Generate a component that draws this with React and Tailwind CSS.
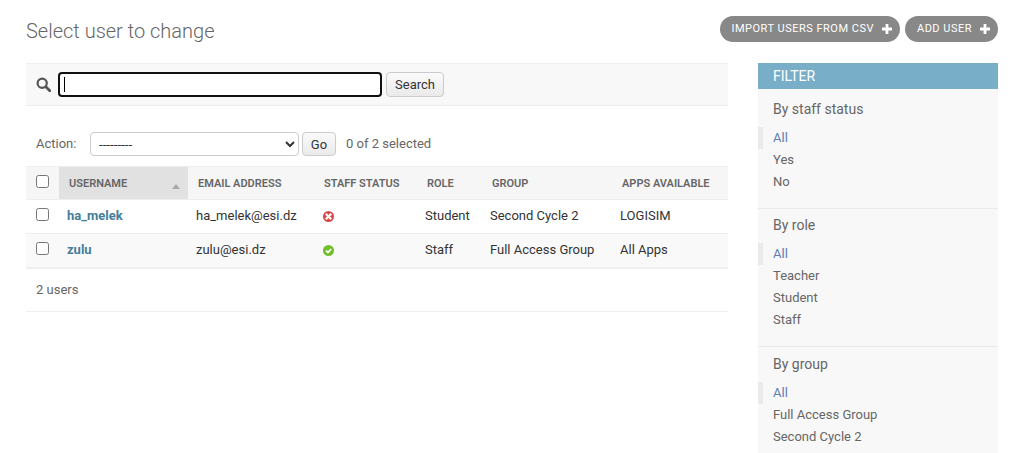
const font = { fontFamily: "Roboto, sans-serif" };

function PlusIcon() {
  return (
    <svg width="10" height="10" viewBox="0 0 10 10" className="ml-[8px]" fill="#fff">
      <path d="M3.6 0h2.8v3.6H10v2.8H6.4V10H3.6V6.4H0V3.6h3.6z" />
    </svg>
  );
}

function SearchIcon() {
  return (
    <svg width="15" height="15" viewBox="0 0 15 15" fill="none" stroke="#555">
      <circle cx="6.2" cy="6.2" r="4.6" strokeWidth="2.2" />
      <path d="M9.8 9.8l4 4" strokeWidth="2.8" strokeLinecap="round" />
    </svg>
  );
}

function NoIcon() {
  return (
    <svg width="11" height="11" viewBox="0 0 11 11" className="block">
      <circle cx="5.5" cy="5.5" r="5.5" fill="#dd4646" />
      <path d="M3.5 3.5l4 4M7.5 3.5l-4 4" stroke="#fff" strokeWidth="2.2" strokeLinecap="square" />
    </svg>
  );
}

function YesIcon() {
  return (
    <svg width="11" height="11" viewBox="0 0 11 11" className="block">
      <circle cx="5.5" cy="5.5" r="5.5" fill="#70bf2b" />
      <path d="M3 5.6l1.9 1.9L8.1 4" stroke="#fff" strokeWidth="1.8" fill="none" />
    </svg>
  );
}

function Checkbox() {
  return <input type="checkbox" className="block w-[13px] h-[13px] m-0" />;
}

function ToolButton({ children }) {
  return (
    <a className="flex items-center h-[26px] pl-[12px] pr-[8px] rounded-[15px] bg-[#888] text-white text-[11px] tracking-[0.5px] uppercase">
      {children}
      <PlusIcon />
    </a>
  );
}

const headers = [
  { label: "Email address", w: "w-[126px]" },
  { label: "Staff status", w: "w-[103px]" },
  { label: "Role", w: "w-[65px]" },
  { label: "Group", w: "w-[130px]" },
  { label: "Apps available", w: "" },
];

const rows = [
  { name: "ha_melek", email: "ha_melek@esi.dz", staff: false, role: "Student", group: "Second Cycle 2", apps: "LOGISIM", bg: "bg-white" },
  { name: "zulu", email: "zulu@esi.dz", staff: true, role: "Staff", group: "Full Access Group", apps: "All Apps", bg: "bg-[#f9f9f9]" },
];

function ResultsTable() {
  return (
    <table className="w-full table-fixed border-collapse text-[13px] text-[#333]">
      <thead>
        <tr className="h-[33px] bg-[#f6f6f6] border-t border-b border-[#eee] text-[11px] font-semibold text-[#666] uppercase text-left">
          <th className="w-[33px] pl-[10px] pb-[4px] font-semibold"><Checkbox /></th>
          <th className="w-[129px] pl-[10px] pr-[8px] pt-[2px] bg-[#e1e1e1] font-semibold">
            <div className="flex items-center justify-between">
              <span>Username</span>
              <span className="mt-[5px] w-0 h-0 border-x-[4.5px] border-x-transparent border-b-[5px] border-b-[#aaa]" />
            </div>
          </th>
          {headers.map((h) => (
            <th key={h.label} className={`${h.w} pl-[10px] pt-[2px] font-semibold`}>{h.label}</th>
          ))}
        </tr>
      </thead>
      <tbody>
        {rows.map((r, i) => (
          <tr key={r.name} className={`h-[34px] ${r.bg} ${i === rows.length - 1 ? "border-b-2" : "border-b"} border-[#eee]`}>
            <td className="pl-[10px] pb-[4px]"><Checkbox /></td>
            <td className="pl-[8px] pb-[2px] font-bold text-[#447e9b]">{r.name}</td>
            <td className="pl-[8px] pb-[2px]">{r.email}</td>
            <td className="pl-[9px]">{r.staff ? <YesIcon /> : <NoIcon />}</td>
            <td className="pl-[8px] pb-[2px]">{r.role}</td>
            <td className="pl-[8px] pb-[2px]">{r.group}</td>
            <td className="pl-[8px] pb-[2px]">{r.apps}</td>
          </tr>
        ))}
      </tbody>
    </table>
  );
}

function FilterGroup({ title, items, pt, last }) {
  return (
    <div className={`${pt} ${last ? "pb-[30px]" : "pb-[15px] border-b border-[#eaeaea]"}`}>
      <h3 className="pl-[15px] text-[14px] leading-[20px] text-[#666] mb-[8px]">{title}</h3>
      <ul className="text-[13px] text-[#666]">
        {items.map((it, i) => (
          <li key={it} className={`h-[22px] leading-[22px] pl-[10px] border-l-[5px] ${i === 0 ? "border-[#eaeaea] text-[#5b80b2]" : "border-transparent"}`}>
            {it}
          </li>
        ))}
      </ul>
    </div>
  );
}

export default function App() {
  return (
    <div style={font} className="h-[453px] overflow-hidden bg-white pl-[26px] pr-[16px] pt-[16px]">
      <div className="flex justify-between items-start h-[47px]">
        <h1 className="text-[20px] leading-[30px] font-light text-[#666]">Select user to change</h1>
        <div className="flex gap-[5px]">
          <ToolButton>Import users from CSV</ToolButton>
          <ToolButton>Add user</ToolButton>
        </div>
      </div>
      <div className="flex gap-[30px] items-start">
        <div className="w-[702px]">
          <div className="h-[43px] flex items-center pl-[10px] bg-[#f8f8f8] border-y border-[#eee]">
            <span className="mr-[7px]"><SearchIcon /></span>
            <div className="w-[324px] h-[25px] border-[2px] border-[#101010] rounded-[4px] bg-white flex items-center pl-[4px]">
              <span className="w-px h-[15px] bg-black" />
            </div>
            <button className="ml-[4px] h-[25px] w-[58px] text-[13px] text-[#333] bg-[linear-gradient(#fafafa,#eaeaea)] border border-[#ccc] rounded-[4px]">Search</button>
          </div>
          <div className="h-[60px] pt-[16px] flex items-center pl-[10px] text-[13px] text-[#666]">
            <span className="w-[54px]">Action:</span>
            <select className="w-[209px] h-[24px] pl-[4px] text-[13.33px] text-[#333] bg-white border border-[#ccc] rounded-[4px]">
              <option>---------</option>
            </select>
            <button className="ml-[3px] h-[24px] w-[34px] pt-[1px] text-[13px] text-[#333] bg-[linear-gradient(#fafafa,#eaeaea)] border border-[#ccc] rounded-[4px]">Go</button>
            <span className="ml-[10px]">0 of 2 selected</span>
          </div>
          <ResultsTable />
          <div className="h-[43px] flex items-center pl-[10px] text-[13px] text-[#666] border-b border-[#eee]">2 users</div>
        </div>
        <aside className="w-[240px] bg-[#f8f8f8]">
          <h2 className="h-[26px] pl-[15px] leading-[26px] text-[14px] uppercase text-white bg-[#79aec8]">Filter</h2>
          <FilterGroup title="By staff status" items={["All", "Yes", "No"]} pt="pt-[10px]" />
          <FilterGroup title="By role" items={["All", "Teacher", "Student", "Staff"]} pt="pt-[6px]" />
          <FilterGroup title="By group" items={["All", "Full Access Group", "Second Cycle 2"]} pt="pt-[7px]" last />
        </aside>
      </div>
    </div>
  );
}
